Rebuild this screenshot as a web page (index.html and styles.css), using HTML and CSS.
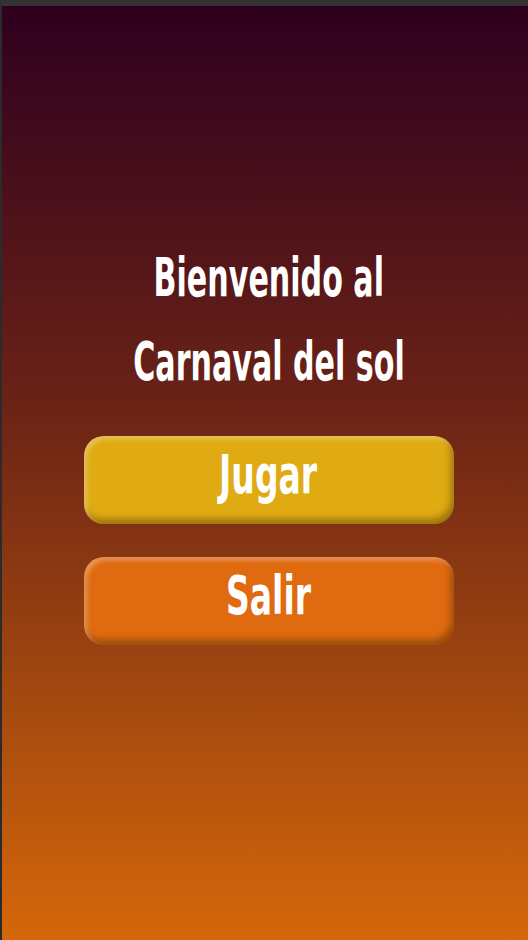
FILE: index.html
```html
<!DOCTYPE html>
<html lang="es">
<head>
<meta charset="utf-8">
<title>Carnaval del sol</title>
<link rel="stylesheet" href="styles.css">
</head>
<body>
<div class="frame">
  <main class="screen">
    <h1 class="title">
      <span class="line"><span class="narrow">Bienvenido al</span></span>
      <span class="line"><span class="narrow">Carnaval del sol</span></span>
    </h1>
    <button class="btn btn-play"><span class="narrow-btn">Jugar</span></button>
    <button class="btn btn-exit"><span class="narrow-btn">Salir</span></button>
  </main>
</div>
</body>
</html>
```
FILE: styles.css
```css
html, body {
  margin: 0;
  padding: 0;
  height: 100%;
  background: #333333;
}
.frame {
  height: 940px;
  box-sizing: border-box;
  border-top: 6px solid #333333;
  border-left: 2px solid #2b2b2b;
  display: flex;
}
.screen {
  flex: 1;
  background: linear-gradient(to bottom, #2e001f 0%, #6a2216 42%, #9c4410 70%, #d5670a 100%);
  display: flex;
  flex-direction: column;
  align-items: center;
  padding-top: 230px;
  padding-left: 7px;
  font-family: "DejaVu Sans Condensed", "DejaVu Sans", sans-serif;
  color: #ffffff;
}
.title {
  margin: 0 0 32px 0;
  font-weight: bold;
  font-size: 54px;
  display: flex;
  flex-direction: column;
  align-items: center;
}
.line {
  display: block;
  line-height: 84px;
  height: 84px;
}
.narrow {
  display: inline-block;
  transform: scaleX(0.62);
}
.narrow-btn {
  display: inline-block;
  transform: scaleX(0.68);
}
.btn {
  width: 370px;
  height: 88px;
  border: none;
  border-radius: 20px;
  color: #ffffff;
  font-family: inherit;
  font-weight: bold;
  font-size: 54px;
  line-height: 1;
  padding: 0 0 10px 0;
  margin: 0 0 33px 0;
  box-shadow: inset 3px 3px 5px rgba(255, 255, 255, 0.32), inset -3px -5px 7px rgba(0, 0, 0, 0.32);
}
.btn-play {
  background: #e0aa12;
}
.btn-exit {
  background: #e06a10;
}
```
